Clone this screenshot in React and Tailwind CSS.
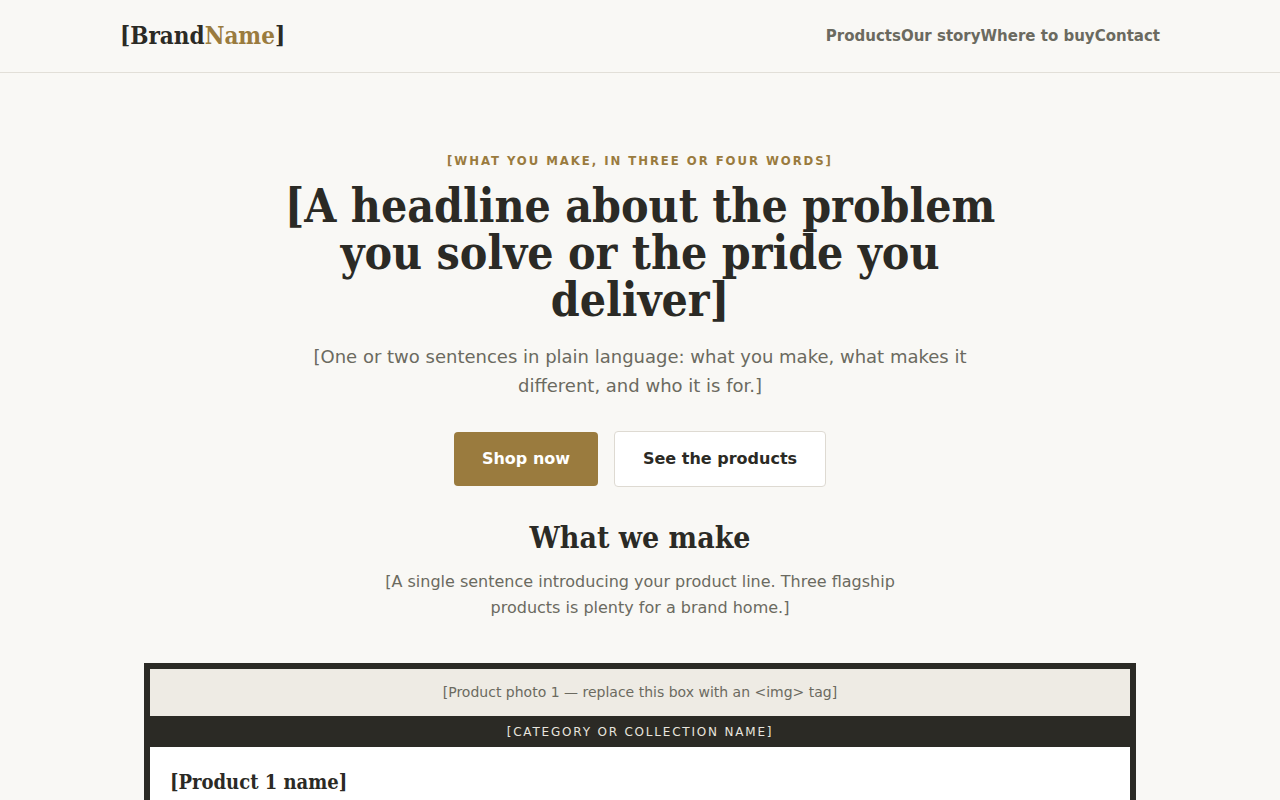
import React from 'react';

const navLinks = ['Products', 'Our story', 'Where to buy', 'Contact'];

const products = [
  { id: 1, category: '[Category or collection name]', name: '[Product 1 name]' },
];

// serif headings render with the condensed cut
const serif = "font-['DejaVu_Serif_Condensed','DejaVu_Serif',serif]";
const sans = "font-['DejaVu_Sans','Liberation_Sans',sans-serif]";
const sansCond = "font-['DejaVu_Sans_Condensed','DejaVu_Sans',sans-serif]";

const App = () => {
  return (
    <div className={`min-h-screen bg-[#f9f8f5] text-[#2b2a25] ${sans}`}>
      {/* Header */}
      <header className="border-b border-[#e2dfd8]">
        <div className="mx-auto flex h-[72px] max-w-[1040px] items-center justify-between">
          <a href="#" className={`${serif} text-[24px] font-bold`}>
            [Brand<span className="text-[#9a7b3e]">Name</span>]
          </a>
          <nav className="flex text-[15px] font-bold text-[#6b6a60]">
            {navLinks.map((link) => (
              <a key={link} href="#">{link}</a>
            ))}
          </nav>
        </div>
      </header>

      {/* Hero */}
      <section className="mx-auto flex max-w-[760px] flex-col items-center pt-[78px] text-center">
        <p className={`${sansCond} text-[13px] font-bold uppercase tracking-[0.15em] text-[#9a7b3e]`}>
          [What you make, in three or four words]
        </p>
        <h1 className={`${serif} mt-[12px] text-[46px] font-bold leading-[47px]`}>
          [A headline about the problem you solve or the pride you deliver]
        </h1>
        <p className="mt-[18px] max-w-[680px] text-[18px] leading-[29px] text-[#6b6a60]">
          [One or two sentences in plain language: what you make, what makes it different, and who it is for.]
        </p>
        <div className="mt-[32px] flex gap-4 text-[16px] font-bold">
          <a href="#" className="flex h-[54px] w-[144px] items-center justify-center rounded-[4px] bg-[#9a7b3e] text-white">
            Shop now
          </a>
          <a href="#" className="-mt-px flex h-[56px] w-[212px] items-center justify-center rounded-[4px] border border-[#dedad2] bg-white text-[#2b2a25]">
            See the products
          </a>
        </div>
      </section>

      {/* Products */}
      <section className="mx-auto mt-[32px] max-w-[992px] text-center">
        <h2 className={`${serif} text-[30px] font-bold leading-[38px]`}>What we make</h2>
        <p className="mx-auto mt-[12px] max-w-[540px] text-[16px] leading-[26px] text-[#6b6a60]">
          [A single sentence introducing your product line. Three flagship products is plenty for a brand home.]
        </p>

        <div className="mt-[42px] flex flex-col gap-6">
          {products.map((p) => (
            <article key={p.id} className="border-[6px] border-[#2b2a25] bg-white text-left">
              <div className="flex h-[47px] items-center justify-center bg-[#eeebe4] text-[14px] text-[#6b6a60]">
                [Product photo {p.id} — replace this box with an &lt;img&gt; tag]
              </div>
              <div className="flex h-[31px] items-center justify-center bg-[#2b2a25] pt-px text-[12px] uppercase tracking-[0.15em] text-[#e8e5de]">
                {p.category}
              </div>
              <div className="px-[20px] pt-[20px] pb-6">
                <h3 className={`${serif} text-[20px] font-bold`}>{p.name}</h3>
              </div>
            </article>
          ))}
        </div>
      </section>
    </div>
  );
};

export default App;
